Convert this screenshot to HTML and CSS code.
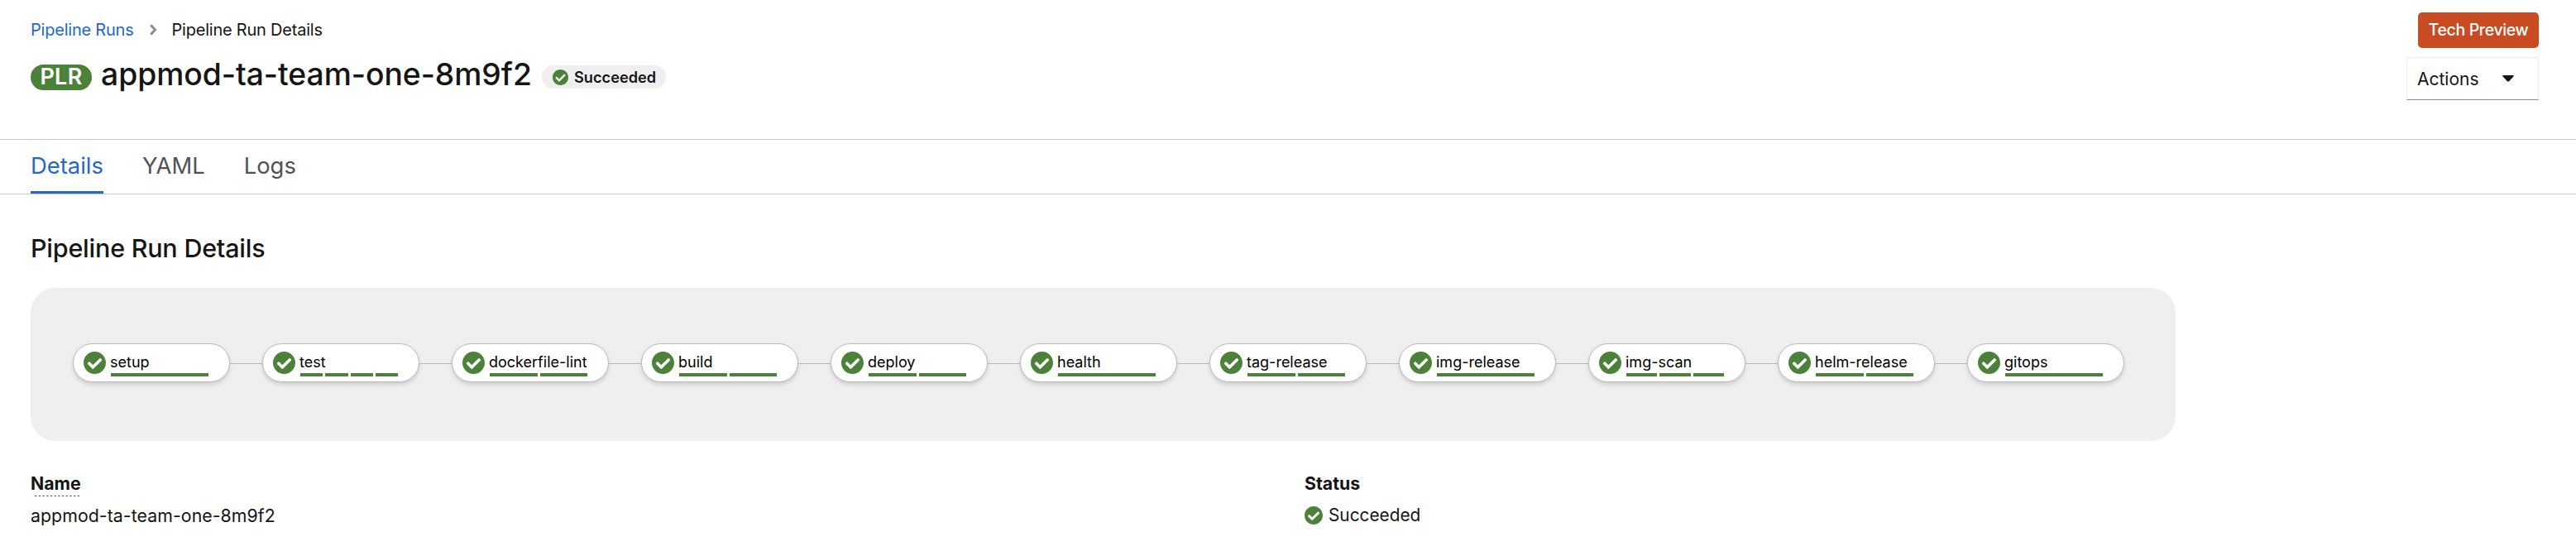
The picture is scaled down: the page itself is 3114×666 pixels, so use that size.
FILE: index.html
```html
<!DOCTYPE html>
<html lang="en">
<head>
<meta charset="utf-8">
<title>Pipeline Run Details</title>
<link rel="stylesheet" href="styles.css">
</head>
<body>
<svg class="defs" aria-hidden="true">
  <symbol id="check" viewBox="8 8 496 496"><path fill="currentColor" d="M504 256c0 137-111 248-248 248S8 393 8 256 119 8 256 8s248 111 248 248zM227.300 387.300l184-184c6.200-6.200 6.200-16.400 0-22.600l-22.600-22.600c-6.200-6.200-16.400-6.200-22.600 0L216 308.100l-70.100-70.100c-6.200-6.200-16.400-6.200-22.600 0l-22.600 22.600c-6.200 6.200-6.200 16.400 0 22.600l104 104c6.200 6.200 16.400 6.200 22.600 0z"/></symbol>
</svg>
<header class="header">
  <div class="heading">
    <nav class="breadcrumb">
      <a class="breadcrumb-link" href="#">Pipeline Runs</a>
      <svg class="chevron" viewBox="0 0 9 14"><path d="M1.800 1.200 7 7l-5.200 5.800" fill="none" stroke="#8a8d90" stroke-width="3"/></svg>
      <span class="breadcrumb-current">Pipeline Run Details</span>
    </nav>
    <div class="title-row">
      <span class="kind">PLR</span>
      <h1 class="title">appmod-ta-team-one-8m9f2</h1>
      <span class="badge"><svg class="badge-icon"><use href="#check"/></svg>Succeeded</span>
    </div>
  </div>
  <div class="header-side">
    <span class="preview">Tech Preview</span>
    <button class="actions">Actions<svg class="caret" viewBox="0 0 14 8"><path d="M1 0h12q1.200.4.400 1.500L8 7.200q-1 .9-2 0L.600 1.500Q-.2.4 1 0z" fill="#151515"/></svg></button>
  </div>
</header>
<nav class="tabs">
  <a class="tab tab-active" href="#">Details</a>
  <a class="tab" href="#">YAML</a>
  <a class="tab" href="#">Logs</a>
</nav>
<main class="content">
  <h2 class="section-title">Pipeline Run Details</h2>
  <div class="pipeline">
    <div class="node"><svg class="node-icon"><use href="#check"/></svg><div class="node-body"><span class="label">setup</span><div class="steps"><i></i></div></div></div>
    <div class="node"><svg class="node-icon"><use href="#check"/></svg><div class="node-body"><span class="label">test</span><div class="steps"><i></i><i></i><i></i><i></i></div></div></div>
    <div class="node"><svg class="node-icon"><use href="#check"/></svg><div class="node-body"><span class="label">dockerfile-lint</span><div class="steps"><i></i><i></i></div></div></div>
    <div class="node"><svg class="node-icon"><use href="#check"/></svg><div class="node-body"><span class="label">build</span><div class="steps"><i></i><i></i></div></div></div>
    <div class="node"><svg class="node-icon"><use href="#check"/></svg><div class="node-body"><span class="label">deploy</span><div class="steps"><i></i><i></i></div></div></div>
    <div class="node"><svg class="node-icon"><use href="#check"/></svg><div class="node-body"><span class="label">health</span><div class="steps"><i></i></div></div></div>
    <div class="node"><svg class="node-icon"><use href="#check"/></svg><div class="node-body"><span class="label">tag-release</span><div class="steps"><i></i><i></i></div></div></div>
    <div class="node"><svg class="node-icon"><use href="#check"/></svg><div class="node-body"><span class="label">img-release</span><div class="steps"><i></i></div></div></div>
    <div class="node"><svg class="node-icon"><use href="#check"/></svg><div class="node-body"><span class="label">img-scan</span><div class="steps"><i></i><i></i><i></i></div></div></div>
    <div class="node"><svg class="node-icon"><use href="#check"/></svg><div class="node-body"><span class="label">helm-release</span><div class="steps"><i></i><i></i></div></div></div>
    <div class="node"><svg class="node-icon"><use href="#check"/></svg><div class="node-body"><span class="label">gitops</span><div class="steps"><i></i></div></div></div>
  </div>
  <div class="details">
    <dl class="detail">
      <dt class="term">Name<svg class="dots" viewBox="0 0 54 1"><path d="M0 .5h54" stroke="#4f5255" stroke-dasharray="2.400 2.300"/></svg></dt>
      <dd class="value">appmod-ta-team-one-8m9f2</dd>
    </dl>
    <dl class="detail">
      <dt class="term">Status</dt>
      <dd class="value value-status"><svg class="status-icon"><use href="#check"/></svg>Succeeded</dd>
    </dl>
  </div>
</main>
</body>
</html>
```

FILE: styles.css
```css
* { box-sizing: border-box; }
body {
  margin: 0;
  height: 666px;
  overflow: hidden;
  background: #fff;
  color: #151515;
  font-family: Inter, "Open Sans", sans-serif;
}
h1, h2, dl, dd { margin: 0; }
a { color: inherit; text-decoration: none; }
svg { display: block; flex: none; }
.defs { width: 0; height: 0; position: absolute; }

.header {
  display: flex;
  justify-content: space-between;
  height: 169px;
  padding: 0 45px 0 37px;
  border-bottom: 1px solid #c8c8c8;
}
.heading { padding-top: 21px; }
.breadcrumb {
  display: flex;
  align-items: center;
  height: 30px;
  font-size: 20px;
  letter-spacing: -0.22px;
}
.breadcrumb-link { color: #2468c8; }
.chevron { width: 10px; height: 14px; margin: 0 18px; }
.title-row {
  display: flex;
  align-items: center;
  height: 48px;
  margin-top: 18px;
}
.kind {
  width: 74px;
  height: 31px;
  margin-top: 1px;
  border-radius: 16px;
  background: #4c8139;
  color: #fff;
  font-size: 27px;
  font-weight: 600;
  line-height: 30px;
  letter-spacing: 0.3px;
  text-align: center;
}
.title {
  width: 532px;
  padding: 0 0 7px 11px;
  font-size: 37.300px;
  font-weight: 500;
  line-height: 41px;
  letter-spacing: -0.05px;
  white-space: nowrap;
}
.badge {
  display: flex;
  align-items: center;
  width: 150px;
  height: 28px;
  margin-left: 12px;
  padding-left: 13px;
  border-radius: 14px;
  background: #efefef;
  font-size: 18.200px;
  font-weight: 600;
}
.badge-icon { width: 19px; height: 19px; margin-right: 7px; color: #4c8139; }

.header-side {
  display: flex;
  flex-direction: column;
  align-items: flex-end;
  gap: 11px;
  padding-top: 15px;
}
.preview {
  width: 146px;
  height: 43px;
  border-radius: 5px;
  background: #c84b21;
  color: #fff;
  font-size: 19.500px;
  font-weight: 500;
  line-height: 42px;
  letter-spacing: -0.35px;
  text-align: center;
}
.actions {
  display: flex;
  align-items: center;
  width: 160px;
  height: 52px;
  padding: 0 0 0 12px;
  border: 1px solid #ededed;
  border-bottom-color: #8a8d90;
  background: #fff;
  color: #151515;
  font: 400 21px Inter, sans-serif;
}
.caret { width: 14px; height: 8px; margin-left: 28px; }

.tabs {
  display: flex;
  gap: 47px;
  height: 66px;
  padding-left: 37px;
  border-bottom: 1px solid #c8c8c8;
  color: #4f5255;
  font-size: 27.400px;
  line-height: 62px;
}
.tab { height: 65px; }
.tab-active { width: 88px; color: #2468c8; border-bottom: 3px solid #2468c8; }

.content { padding: 45px 37px 0; }
.section-title {
  font-size: 30.500px;
  font-weight: 500;
  line-height: 40px;
  letter-spacing: -0.23px;
}
.pipeline {
  display: flex;
  align-items: center;
  gap: 39.500px;
  width: 2593px;
  height: 185px;
  margin-top: 28px;
  padding: 0 51px 4px;
  border-radius: 30px;
  background: #efefef;
}
.node {
  position: relative;
  display: flex;
  flex: none;
  width: 189.500px;
  height: 47px;
  padding-left: 12px;
  border: 1px solid #b8bbbe;
  border-radius: 24px;
  background: #fff;
  box-shadow: 0 3px 5px rgba(3, 3, 3, 0.14);
}
/* Edge joining a node to the one after it */
.node:not(:last-child)::after {
  content: "";
  position: absolute;
  left: 188.500px;
  top: 23px;
  width: 40px;
  height: 1px;
  background: #b8bbbe;
}
.node-icon { width: 27px; height: 27px; margin: 9px 6px 0 0; color: #4c8139; }
.node-body { width: 118px; padding-top: 8px; }
.label {
  display: block;
  height: 27px;
  margin-left: -1px;
  color: #000;
  font-size: 18px;
  line-height: 27px;
  white-space: nowrap;
}
.steps { display: flex; gap: 3px; }
.steps i { flex: 1; height: 4px; background: #4c8139; }

.details {
  display: grid;
  grid-template-columns: 1540px 1fr;
  margin-top: 36px;
  font-size: 21.300px;
  line-height: 30px;
}
.term { height: 39px; font-weight: 700; }
.dots { width: 54px; height: 1px; margin-left: 5px; }
.value { letter-spacing: 0.06px; }
.value-status { display: flex; align-items: center; height: 30px; font-size: 20.800px; letter-spacing: 0; }
.status-icon { width: 22px; height: 22px; margin-right: 7px; color: #4c8139; }
```
